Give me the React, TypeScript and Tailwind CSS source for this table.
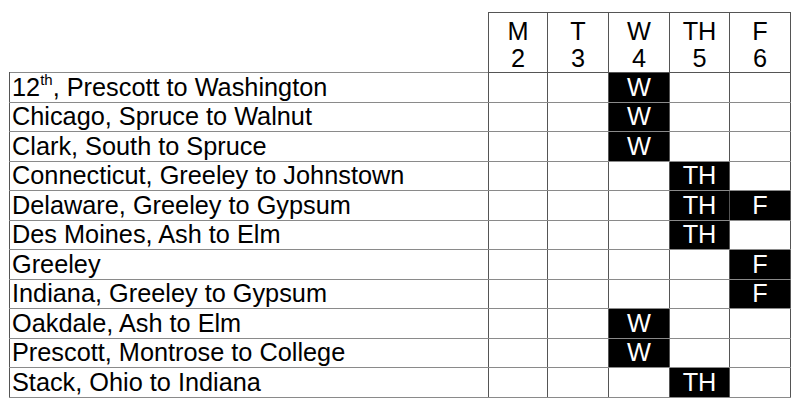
const days = [
  { key: "M", num: "2" },
  { key: "T", num: "3" },
  { key: "W", num: "4" },
  { key: "TH", num: "5" },
  { key: "F", num: "6" },
];

const streets: { name: React.ReactNode; on: string[] }[] = [
  { name: <>12<sup className="text-[15px] relative -top-[2px] align-top leading-none">th</sup>, Prescott to Washington</>, on: ["W"] },
  { name: "Chicago, Spruce to Walnut", on: ["W"] },
  { name: "Clark, South to Spruce", on: ["W"] },
  { name: "Connecticut, Greeley to Johnstown", on: ["TH"] },
  { name: "Delaware, Greeley to Gypsum", on: ["TH", "F"] },
  { name: "Des Moines, Ash to Elm", on: ["TH"] },
  { name: "Greeley", on: ["F"] },
  { name: "Indiana, Greeley to Gypsum", on: ["F"] },
  { name: "Oakdale, Ash to Elm", on: ["W"] },
  { name: "Prescott, Montrose to College", on: ["W"] },
  { name: "Stack, Ohio to Indiana", on: ["TH"] },
];

const widths = ["w-[59px]", "w-[61px]", "w-[61px]", "w-[60px]", "w-[61px]"];

export default function App() {
  return (
    <div className="w-[800px] h-[406px] bg-white pl-[9px] pt-[12px] font-['Liberation_Sans',Arial,sans-serif] text-[25.3px] text-black">
      <table className="border-collapse table-fixed">
        <thead>
          <tr className="h-[60px]">
            <th className="w-[479px] p-0" />
            {days.map((d, i) => (
              <th
                key={d.key}
                className={`${widths[i]} p-0 pt-[4px] border border-[#555] font-normal text-center leading-[27px] align-middle`}
              >
                <div>{d.key}</div>
                <div>{d.num}</div>
              </th>
            ))}
          </tr>
        </thead>
        <tbody>
          {streets.map((s, r) => (
            <tr key={r} className="h-[29.5px]">
              <td className="p-0 pl-[2px] border-y border-y-[#8a8a8a] border-x border-x-[#555] leading-[27px] whitespace-nowrap">
                {s.name}
              </td>
              {days.map((d) => {
                const on = s.on.includes(d.key);
                return (
                  <td
                    key={d.key}
                    className={`p-0 border-y border-y-[#8a8a8a] border-x border-x-[#555] text-center leading-[27px] ${
                      on ? "bg-black text-white" : ""
                    }`}
                  >
                    {on ? d.key : ""}
                  </td>
                );
              })}
            </tr>
          ))}
        </tbody>
      </table>
    </div>
  );
}
